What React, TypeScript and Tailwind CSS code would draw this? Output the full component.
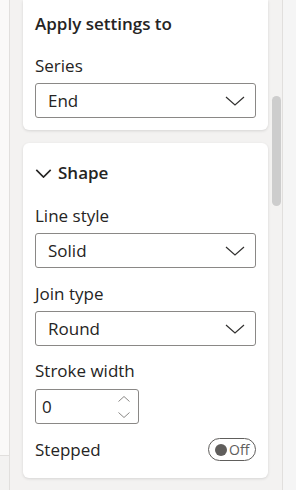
import React from 'react'

const font = { fontFamily: '"Open Sans", "Noto Sans", sans-serif' }

const Chevron = ({ className = '' }: { className?: string }) => (
  <svg viewBox="0 0 20 10" className={className} fill="none" stroke="currentColor" strokeWidth="1.2">
    <path d="M1 1l9 8 9-8" />
  </svg>
)

const Dropdown = ({ value }: { value: string }) => (
  <div className="flex h-[35px] items-center justify-between rounded-[3px] border border-[#8a8886] bg-white pl-[12px] pr-[10px]">
    <span className="text-[17px] text-[#252423]">{value}</span>
    <Chevron className="h-[10px] w-[20px] text-[#323130]" />
  </div>
)

const Label = ({ children, className = '' }: { children: React.ReactNode; className?: string }) => (
  <div className={`text-[17px] leading-[22px] text-[#252423] ${className}`}>{children}</div>
)

export default function App() {
  return (
    <div style={font} className="flex h-[490px] w-[296px] overflow-hidden bg-[#f3f2f1]">
      {/* left edge strip */}
      <div className="flex w-[10px] flex-col border-r border-[#e1dfdd]">
        <div className="h-[456px] border-b border-[#e1dfdd] bg-[#faf9f8]" />
        <div className="flex-1 bg-[#f3f2f1]" />
      </div>

      {/* pane */}
      <div className="w-[258px] pl-[13px]">
        {/* Apply settings card */}
        <section className="rounded-b-[6px] bg-white px-[12px] pb-[12px] pt-[12px] shadow-[0_1px_3px_rgba(0,0,0,0.12)]">
          <h2 className="text-[17px] font-semibold leading-[24px] text-[#252423]">Apply settings to</h2>
          <Label className="mt-[19px]">Series</Label>
          <div className="mt-[6px]">
            <Dropdown value="End" />
          </div>
        </section>

        {/* Shape card */}
        <section className="mt-[13px] rounded-[6px] bg-white px-[12px] pb-[17px] pt-[18px] shadow-[0_1px_3px_rgba(0,0,0,0.12)]">
          <div className="flex h-[24px] items-center gap-[6px]">
            <svg viewBox="0 0 18 10" className="h-[9px] w-[17px] text-[#252423]" fill="none" stroke="currentColor" strokeWidth="1.8">
              <path d="M1 1l8 8 8-8" />
            </svg>
            <span className="text-[17px] font-semibold text-[#252423]">Shape</span>
          </div>

          <Label className="mt-[20px]">Line style</Label>
          <div className="mt-[6px]">
            <Dropdown value="Solid" />
          </div>

          <Label className="mt-[15px]">Join type</Label>
          <div className="mt-[6px]">
            <Dropdown value="Round" />
          </div>

          <Label className="mt-[14px]">Stroke width</Label>
          <div className="mt-[7px] flex h-[35px] w-[104px] items-center justify-between rounded-[3px] border border-[#8a8886] pl-[6px] pr-[8px]">
            <span className="text-[17px] text-[#252423]">0</span>
            <div className="flex flex-col gap-[10px] text-[#8a8886]">
              <svg viewBox="0 0 12 6" className="h-[6px] w-[12px]" fill="none" stroke="currentColor" strokeWidth="1">
                <path d="M0.5 5.5l5.5-5 5.5 5" />
              </svg>
              <svg viewBox="0 0 12 6" className="h-[6px] w-[12px]" fill="none" stroke="currentColor" strokeWidth="1">
                <path d="M0.5 0.5l5.5 5 5.5-5" />
              </svg>
            </div>
          </div>

          <div className="mt-[14px] flex h-[23px] items-center justify-between">
            <span className="text-[17px] text-[#252423]">Stepped</span>
            <div className="flex h-[23px] w-[48px] items-center gap-[2px] rounded-full border border-[#605e5c] pl-[6px]">
              <span className="h-[12px] w-[12px] rounded-full bg-[#605e5c]" />
              <span className="text-[14px] leading-none text-[#605e5c]">Off</span>
            </div>
          </div>
        </section>
      </div>

      {/* scrollbar */}
      <div className="w-[14px] pl-[4px] pt-[96px]">
        <div className="h-[110px] w-[9px] rounded-full bg-[#cdcdcd]" />
      </div>

      {/* right edge strip */}
      <div className="flex-1 border-l border-[#e1dfdd] bg-[#f5f5f5]" />
    </div>
  )
}
